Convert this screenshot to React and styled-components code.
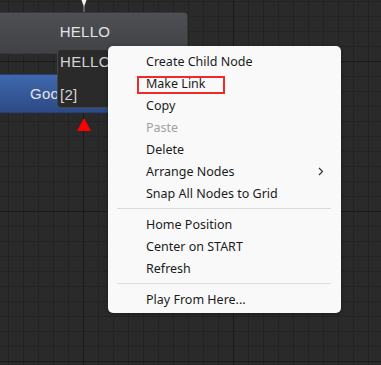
import React from 'react'
import styled, { createGlobalStyle } from 'styled-components'

const GlobalStyle = createGlobalStyle`
  html, body {
    margin: 0;
    padding: 0;
    background: #2a2a2a;
  }
  * {
    box-sizing: border-box;
  }
`

const Canvas = styled.div`
  position: relative;
  width: 100vw;
  height: 100vh;
  overflow: hidden;
  background-color: #2a2a2a;
  background-image:
    linear-gradient(to right, #1a1a1a 1px, transparent 1px),
    linear-gradient(to bottom, #1a1a1a 1px, transparent 1px),
    linear-gradient(to right, #232323 1px, transparent 1px),
    linear-gradient(to bottom, #232323 1px, transparent 1px);
  background-size: 150px 150px, 150px 150px, 15px 15px, 15px 15px;
  background-position: 83px 0, 0 61px, 8px 0, 0 1px;
  font-family: 'Liberation Sans', Arial, sans-serif;
`

const Node = styled.div`
  position: absolute;
  left: ${(p) => p.x}px;
  top: ${(p) => p.y}px;
  width: ${(p) => p.w}px;
  height: ${(p) => p.h}px;
  display: flex;
  align-items: center;
  justify-content: ${(p) => (p.blue ? 'flex-start' : 'center')};
  padding: ${(p) => (p.blue ? '0 0 0 49px' : '0 0 4px 2px')};
  border-radius: 4px;
  border: 1px solid ${(p) => (p.blue ? '#24407a' : '#37393c')};
  background: ${(p) =>
    p.blue
      ? 'linear-gradient(to bottom, #4068ad, #2c4a86)'
      : 'linear-gradient(to bottom, #4d4f53, #404246)'};
  color: #e4e4e4;
  font-size: 15px;
  letter-spacing: 0.3px;
`

const Pin = styled.svg`
  position: absolute;
  left: ${(p) => p.x}px;
  top: ${(p) => p.y}px;
`

const Tooltip = styled.div`
  position: absolute;
  left: 57px;
  top: 49px;
  width: 70px;
  height: 59px;
  display: flex;
  flex-direction: column;
  justify-content: space-between;
  padding: 3px 0 3px 2px;
  background: #2a2a2a;
  border: 1px solid #454545;
  border-radius: 4px;
  color: #d4d4d4;
  font-size: 15px;
  letter-spacing: 0.3px;
  line-height: 18px;
`

const Menu = styled.div`
  position: absolute;
  left: 108px;
  top: 46px;
  width: 233px;
  padding: 4px 0 3px;
  display: flex;
  flex-direction: column;
  background: #f9f9f9;
  border-radius: 5px;
  box-shadow: 0 1px 4px rgba(0, 0, 0, 0.35);
  font-family: 'Noto Sans', 'Open Sans', sans-serif;
  font-size: 12.5px;
`

const Item = styled.div`
  position: relative;
  height: 22px;
  display: flex;
  align-items: center;
  justify-content: space-between;
  padding: 0 17px 0 38px;
  color: ${(p) => (p.disabled ? '#a2a2a2' : '#1b1b1b')};
`

const Separator = styled.div`
  height: 1px;
  margin: 4px 10px 4px 9px;
  background: #dcdcdc;
`

const Highlight = styled.div`
  position: absolute;
  left: 29px;
  top: 4px;
  width: 88px;
  height: 18px;
  border: 2px solid #ee2a2a;
`

const Chevron = () => (
  <svg width='6' height='9' viewBox='0 0 6 9'>
    <path d='M1 1 L4.5 4.5 L1 8' fill='none' stroke='#333' strokeWidth='1.2' />
  </svg>
)

const groups = [
  [
    { label: 'Create Child Node' },
    { label: 'Make Link', marked: true },
    { label: 'Copy' },
    { label: 'Paste', disabled: true },
    { label: 'Delete' },
    { label: 'Arrange Nodes', sub: true },
    { label: 'Snap All Nodes to Grid' },
  ],
  [{ label: 'Home Position' }, { label: 'Center on START' }, { label: 'Refresh' }],
  [{ label: 'Play From Here...' }],
]

const App = () => (
  <>
    <GlobalStyle />
    <Canvas>
      <Pin x={80} y={0} width='8' height='13' viewBox='0 0 8 13'>
        <path d='M1.5 0 L6.5 0 L4 7 Z' fill='#f2f2f2' />
        <rect x='3.5' y='6' width='1' height='7' fill='#9a9a9a' />
      </Pin>
      <Node x={-20} y={12} w={208} h={42}>
        HELLO
      </Node>
      <Node x={-20} y={74} w={200} h={39} blue>
        Goodbye
      </Node>
      <Tooltip>
        <span>HELLO</span>
        <span>[2]</span>
      </Tooltip>
      <Pin x={77} y={118} width='14' height='13' viewBox='0 0 14 13'>
        <path d='M7 0 L14 13 L0 13 Z' fill='#ff0000' />
      </Pin>
      <Menu>
        {groups.map((group, gi) => (
          <React.Fragment key={gi}>
            {gi > 0 && <Separator />}
            {group.map((item) => (
              <Item key={item.label} disabled={item.disabled}>
                <span>{item.label}</span>
                {item.sub && <Chevron />}
                {item.marked && <Highlight />}
              </Item>
            ))}
          </React.Fragment>
        ))}
      </Menu>
    </Canvas>
  </>
)

export default App
